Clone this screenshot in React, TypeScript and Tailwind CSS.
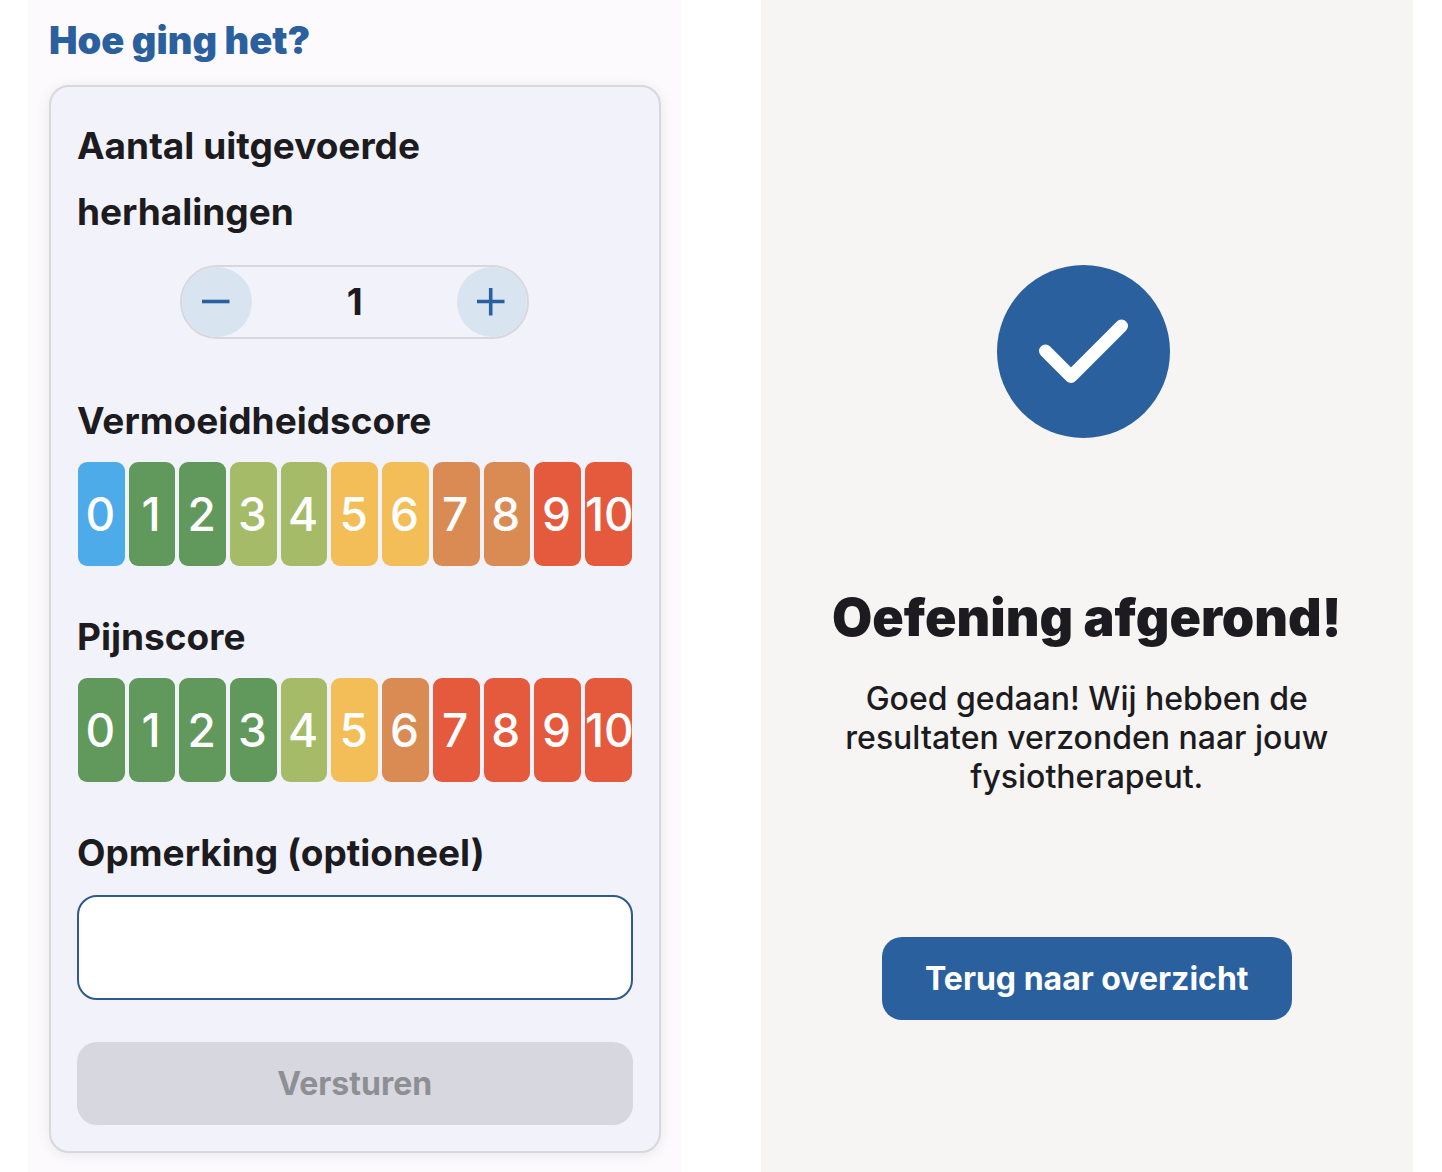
import React, { useState } from 'react';

const FATIGUE_COLORS = [
  'bg-[#4dabe9]',
  'bg-[#61985b]',
  'bg-[#61985b]',
  'bg-[#a5bb68]',
  'bg-[#a5bb68]',
  'bg-[#f3be57]',
  'bg-[#f3be57]',
  'bg-[#d98b53]',
  'bg-[#d98b53]',
  'bg-[#e5593d]',
  'bg-[#e5593d]',
];

const PAIN_COLORS = [
  'bg-[#61985b]',
  'bg-[#61985b]',
  'bg-[#61985b]',
  'bg-[#61985b]',
  'bg-[#a5bb68]',
  'bg-[#f3be57]',
  'bg-[#d98b53]',
  'bg-[#e5593d]',
  'bg-[#e5593d]',
  'bg-[#e5593d]',
  'bg-[#e5593d]',
];

interface ScoreScaleProps {
  id: string;
  label: string;
  colors: string[];
  value: number | null;
  onChange: (value: number) => void;
}

function ScoreScale({ id, label, colors, value, onChange }: ScoreScaleProps) {
  return (
    <section className="mb-[38px]">
      <h2 id={id} className="text-[37px] leading-[66px] font-bold">{label}</h2>
      <div role="group" aria-labelledby={id} className="mt-2 flex gap-1 px-px">
        {colors.map((color, score) => (
          <button
            key={score}
            type="button"
            aria-pressed={value === score}
            onClick={() => onChange(score)}
            className={`${color} h-[104px] min-w-0 flex-1 overflow-hidden rounded-[9px] pr-0.5 text-center text-[46px] font-medium text-white cursor-pointer`}
          >
            {score}
          </button>
        ))}
      </div>
    </section>
  );
}

function Stepper({ value, onChange }: { value: number; onChange: (value: number) => void }) {
  return (
    <div className="mx-auto mt-5 mb-[49px] flex h-[74px] w-[349px] max-w-full items-center justify-between rounded-full border-2 border-[#d6d8dc]">
      <button
        type="button"
        aria-label="Minder"
        onClick={() => onChange(Math.max(0, value - 1))}
        className="flex size-[70px] items-center justify-center rounded-full bg-[#d8e5f0] text-[#2b609f] cursor-pointer"
      >
        <svg width="30" height="28" viewBox="0 0 30 28" fill="none" stroke="currentColor" strokeWidth="3.6">
          <path d="M0 13.500h27.500" />
        </svg>
      </button>
      <output className="text-[37px] font-bold">{value}</output>
      <button
        type="button"
        aria-label="Meer"
        onClick={() => onChange(value + 1)}
        className="flex size-[70px] items-center justify-center rounded-full bg-[#d8e5f0] text-[#2b609f] cursor-pointer"
      >
        <svg width="30" height="28" viewBox="0 0 30 28" fill="none" stroke="currentColor" strokeWidth="3.6">
          <path d="M0 13.500h27.500M13.700 0v27.500" />
        </svg>
      </button>
    </div>
  );
}

function FeedbackForm() {
  const [reps, setReps] = useState(1);
  const [fatigue, setFatigue] = useState<number | null>(null);
  const [pain, setPain] = useState<number | null>(null);
  const [remark, setRemark] = useState('');

  return (
    <main className="bg-[#fdfafd] pt-4 pr-5 pb-[19px] pl-[21px]">
      <h1 className="mb-[21px] text-[38px] leading-[48px] font-black text-[#2b609f]">Hoe ging het?</h1>

      <form
        onSubmit={(e) => e.preventDefault()}
        className="rounded-[20px] border-2 border-[#d6d8dc] bg-[#f2f2fa] p-[26px] shadow-[0_2px_14px_rgba(0,0,0,0.08)]"
      >
        <h2 className="max-w-[420px] text-[37px] leading-[66px] font-bold">Aantal uitgevoerde herhalingen</h2>
        <Stepper value={reps} onChange={setReps} />

        <ScoreScale id="fatigue" label="Vermoeidheidscore" colors={FATIGUE_COLORS} value={fatigue} onChange={setFatigue} />
        <ScoreScale id="pain" label="Pijnscore" colors={PAIN_COLORS} value={pain} onChange={setPain} />

        <label htmlFor="remark" className="block text-[37px] leading-[66px] font-bold">Opmerking (optioneel)</label>
        <textarea
          id="remark"
          value={remark}
          onChange={(e) => setRemark(e.target.value)}
          className="mt-[9px] block h-[105px] w-full resize-none rounded-[20px] border-2 border-[#2f5a8c] bg-white px-5 py-4 text-[32px] focus:outline-none"
        />

        <button
          type="submit"
          disabled={fatigue === null || pain === null}
          className="mt-[42px] h-[83px] w-full rounded-[20px] bg-[#2b609f] text-[32px] font-bold text-white disabled:bg-[#d7d7e0] disabled:text-[#8e8f93]"
        >
          Versturen
        </button>
      </form>
    </main>
  );
}

function ExerciseDone() {
  return (
    <section className="flex flex-col items-center bg-[#f6f5f3] px-[60px] pt-[265px] pb-10 text-center">
      <svg width="180" height="173" viewBox="0 0 180 173" fill="none" aria-hidden="true">
        <circle cx="86.5" cy="86.5" r="86.5" fill="#2b609f" />
        <path d="M48.500 86 74 111.500 124.500 61" stroke="#fff" strokeWidth="13" strokeLinecap="round" strokeLinejoin="round" />
      </svg>
      <h1 className="mt-[150px] text-[52px] leading-[60px] font-black whitespace-nowrap">Oefening afgerond!</h1>
      <p className="mt-[31px] max-w-[510px] text-[32px] leading-[39px] font-medium">
        Goed gedaan! Wij hebben de resultaten verzonden naar jouw fysiotherapeut.
      </p>
      <button type="button" className="mt-[141px] h-[83px] w-[410px] max-w-full rounded-[20px] bg-[#2b609f] text-[32px] font-bold text-white cursor-pointer">
        Terug naar overzicht
      </button>
    </section>
  );
}

export default function App() {
  return (
    <div className="grid min-h-screen grid-cols-2 gap-20 bg-white pr-[29px] pl-7 font-['Inter',sans-serif] text-[#1c1b20]">
      <FeedbackForm />
      <ExerciseDone />
    </div>
  );
}
